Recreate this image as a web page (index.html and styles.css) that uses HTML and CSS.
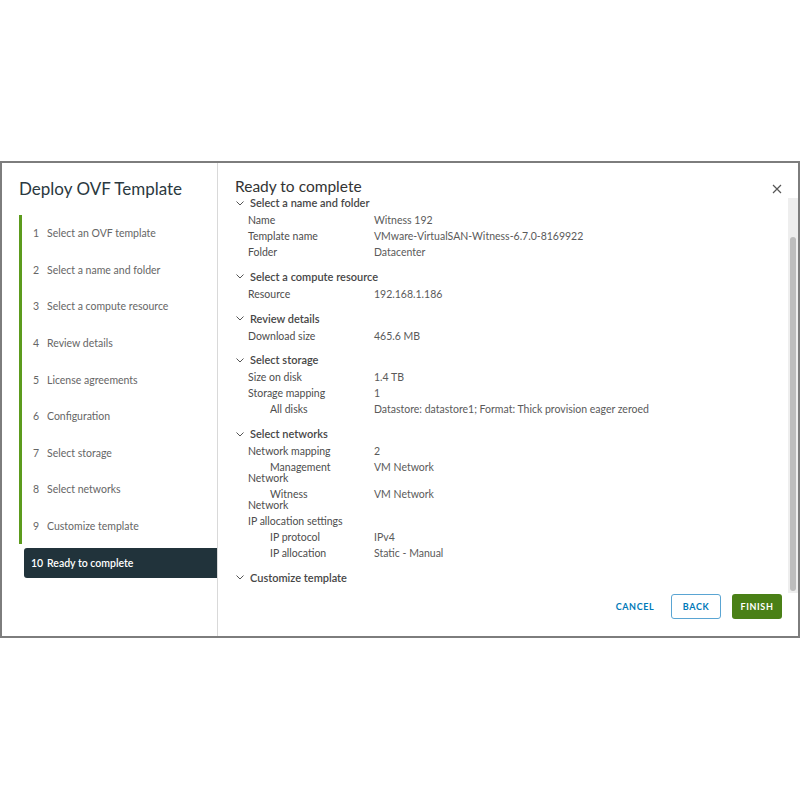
FILE: index.html
```html
<!DOCTYPE html>
<html lang="en">
<head>
    <meta charset="UTF-8">
    <meta name="viewport" content="width=device-width, initial-scale=1.0">
    <title>Deploy OVF Template</title>
    <link rel="stylesheet" href="styles.css">
</head>
<body>
    <div class="modal">
        <aside class="wizard-nav">
            <h1 class="wizard-title">Deploy OVF Template</h1>
            <ol class="steps">
                <li class="step done"><span class="step-num">1</span>Select an OVF template</li>
                <li class="step done"><span class="step-num">2</span>Select a name and folder</li>
                <li class="step done"><span class="step-num">3</span>Select a compute resource</li>
                <li class="step done"><span class="step-num">4</span>Review details</li>
                <li class="step done"><span class="step-num">5</span>License agreements</li>
                <li class="step done"><span class="step-num">6</span>Configuration</li>
                <li class="step done"><span class="step-num">7</span>Select storage</li>
                <li class="step done"><span class="step-num">8</span>Select networks</li>
                <li class="step done"><span class="step-num">9</span>Customize template</li>
                <li class="step active"><span class="step-num">10</span>Ready to complete</li>
            </ol>
        </aside>

        <main class="wizard-main">
            <div class="main-header">
                <h2 class="page-title">Ready to complete</h2>
                <svg class="close" width="10" height="10" viewBox="0 0 10 10">
                    <path d="M1 1 L9 9 M9 1 L1 9" stroke="#565656" stroke-width="1.2" fill="none"/>
                </svg>
            </div>

            <div class="main-body">
                <div class="summary">
                    <section class="block">
                        <div class="block-head">
                            <svg class="chevron" width="8" height="5" viewBox="0 0 8 5"><path d="M0.5 0.5 L4 4 L7.5 0.5" stroke="#555" fill="none"/></svg>
                            Select a name and folder
                        </div>
                        <div class="row"><span class="label">Name</span><span class="value">Witness 192</span></div>
                        <div class="row"><span class="label">Template name</span><span class="value">VMware-VirtualSAN-Witness-6.7.0-8169922</span></div>
                        <div class="row"><span class="label">Folder</span><span class="value">Datacenter</span></div>
                    </section>

                    <section class="block">
                        <div class="block-head">
                            <svg class="chevron" width="8" height="5" viewBox="0 0 8 5"><path d="M0.5 0.5 L4 4 L7.5 0.5" stroke="#555" fill="none"/></svg>
                            Select a compute resource
                        </div>
                        <div class="row"><span class="label">Resource</span><span class="value">192.168.1.186</span></div>
                    </section>

                    <section class="block">
                        <div class="block-head">
                            <svg class="chevron" width="8" height="5" viewBox="0 0 8 5"><path d="M0.5 0.5 L4 4 L7.5 0.5" stroke="#555" fill="none"/></svg>
                            Review details
                        </div>
                        <div class="row"><span class="label">Download size</span><span class="value">465.6 MB</span></div>
                    </section>

                    <section class="block">
                        <div class="block-head">
                            <svg class="chevron" width="8" height="5" viewBox="0 0 8 5"><path d="M0.5 0.5 L4 4 L7.5 0.5" stroke="#555" fill="none"/></svg>
                            Select storage
                        </div>
                        <div class="row"><span class="label">Size on disk</span><span class="value">1.4 TB</span></div>
                        <div class="row"><span class="label">Storage mapping</span><span class="value">1</span></div>
                        <div class="row"><span class="label sub">All disks</span><span class="value">Datastore: datastore1; Format: Thick provision eager zeroed</span></div>
                    </section>

                    <section class="block">
                        <div class="block-head">
                            <svg class="chevron" width="8" height="5" viewBox="0 0 8 5"><path d="M0.5 0.5 L4 4 L7.5 0.5" stroke="#555" fill="none"/></svg>
                            Select networks
                        </div>
                        <div class="row"><span class="label">Network mapping</span><span class="value">2</span></div>
                        <div class="row wrap"><span class="label sub">Management<br>Network</span><span class="value">VM Network</span></div>
                        <div class="row wrap"><span class="label sub">Witness<br>Network</span><span class="value">VM Network</span></div>
                        <div class="row"><span class="label">IP allocation settings</span><span class="value"></span></div>
                        <div class="row"><span class="label sub">IP protocol</span><span class="value">IPv4</span></div>
                        <div class="row"><span class="label sub">IP allocation</span><span class="value">Static - Manual</span></div>
                    </section>

                    <section class="block">
                        <div class="block-head">
                            <svg class="chevron" width="8" height="5" viewBox="0 0 8 5"><path d="M0.5 0.5 L4 4 L7.5 0.5" stroke="#555" fill="none"/></svg>
                            Customize template
                        </div>
                    </section>
                </div>
                <div class="scroll-track"><div class="scroll-thumb"></div></div>
            </div>

            <div class="main-footer">
                <button class="btn btn-link">Cancel</button>
                <button class="btn btn-outline">Back</button>
                <button class="btn btn-success">Finish</button>
            </div>
        </main>
    </div>
</body>
</html>
```

FILE: styles.css
```css
* {
    margin: 0;
    padding: 0;
    box-sizing: border-box;
    font-family: Lato, "Open Sans", sans-serif;
}
body {
    background: #fff;
}
.modal {
    display: flex;
    width: 800px;
    height: 477px;
    margin-top: 161px;
    border: 2px solid #7d7d7d;
    background: #fff;
}

/* left: wizard steps */
.wizard-nav {
    width: 216px;
    border-right: 1px solid #d9d9d9;
    padding: 16px 0 0 17px;
}
.wizard-title {
    font-size: 17px;
    font-weight: 400;
    line-height: 20px;
    color: #2b3940;
}
.steps {
    list-style: none;
    margin-top: 16px;
}
.step {
    display: flex;
    align-items: center;
    height: 36.6px;
    padding-left: 11px;
    font-size: 10.5px;
    color: #666;
}
.step.done {
    border-left: 3px solid #5c9b1d;
}
.step-num {
    width: 14px;
}
.step.active {
    height: 30px;
    margin: 4px 0 0 5px;
    padding-left: 7px;
    background: #21333b;
    color: #fff;
    font-weight: 600;
    border-radius: 3px 0 0 3px;
}
.step.active .step-num {
    width: 16px;
}

/* right: summary */
.wizard-main {
    flex: 1;
    display: flex;
    flex-direction: column;
}
.main-header {
    height: 32px;
    display: flex;
    justify-content: space-between;
    align-items: flex-start;
    padding: 14px 16px 0 17px;
}
.page-title {
    font-size: 15.5px;
    font-weight: 400;
    line-height: 18px;
    color: #333;
}
.close {
    margin-top: 7px;
}
.main-body {
    flex: 1;
    display: flex;
    min-height: 0;
}
.summary {
    flex: 1;
    padding-left: 17px;
}
.block {
    margin-bottom: 8.8px;
}
.block-head {
    display: flex;
    align-items: flex-start;
    gap: 6px;
    height: 17px;
    line-height: 15.5px;
    font-size: 11px;
    font-weight: 600;
    color: #474747;
}
.chevron {
    margin: 5.5px 0 0 1px;
}
.row {
    display: flex;
    height: 16px;
    line-height: 16px;
    padding-left: 13px;
    font-size: 10.5px;
}
.label {
    width: 126px;
    color: #4d4d4d;
}
.label.sub {
    text-indent: 22px;
}
.value {
    color: #5a5a5a;
}
.row.wrap {
    height: 27px;
    line-height: 11px;
    padding-top: 3px;
}
.scroll-track {
    width: 10px;
    margin-top: 3px;
    background: #eeeeee;
}
.scroll-thumb {
    width: 6px;
    height: 354px;
    margin: 39px 0 0 2px;
    background: #bdbdbd;
    border-radius: 3px;
}
.main-footer {
    height: 43px;
    display: flex;
    justify-content: flex-end;
    align-items: flex-start;
    gap: 11px;
    padding: 1px 16px 0 0;
}
.btn {
    width: 50px;
    height: 25px;
    border: 1px solid transparent;
    border-radius: 3px;
    background: none;
    font-size: 9px;
    font-weight: 700;
    letter-spacing: 0.6px;
    text-transform: uppercase;
    color: #0079b8;
}
.btn-outline {
    border-color: #5aa5d3;
}
.btn-success {
    background: #4a8016;
    color: #fff;
}
```
